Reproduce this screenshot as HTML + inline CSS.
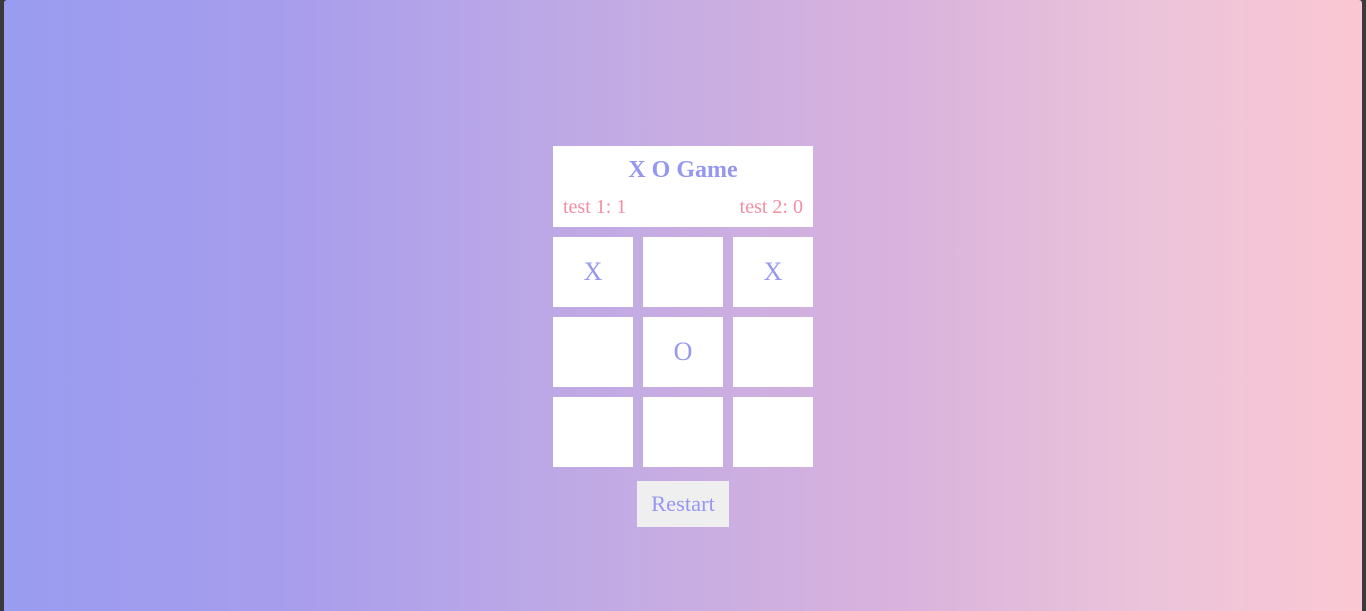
<!DOCTYPE html>
<html><head><style>
html,body{margin:0;padding:0;width:1366px;height:611px;overflow:hidden;background:#3a3a3c;font-family:"Liberation Serif",serif}
.bg{position:absolute;left:4px;top:0;width:1358px;height:611px;background:linear-gradient(90deg,#999cf0 0%,#a79ded 20%,#c2abe4 45%,#d8b2dd 65%,#ecc4da 85%,#fbc6d2 100%);border-radius:3px 3px 0 0}
.hdr{position:absolute;left:553px;top:146px;width:260px;height:81px;background:#fff}
.title{position:absolute;left:0;right:0;top:11px;text-align:center;font-weight:bold;font-size:24px;color:#9597f0}
.s{position:absolute;top:50px;font-size:20px;color:#f58ea3}
.c{position:absolute;width:80px;height:70px;background:#fff;color:#9597f0;font-size:26px;text-align:center;line-height:70px}
.btn{position:absolute;left:637px;top:481px;width:92px;height:46px;background:#efefef;color:#9597f0;font-size:22.5px;text-align:center;line-height:46px}
</style></head><body>
<div class="bg"></div>
<div class="hdr"><div class="title">X O Game</div><div class="s" style="left:10px">test 1: 1</div><div class="s" style="right:10px">test 2: 0</div></div>
<div class="c" style="left:553px;top:237px">X</div>
<div class="c" style="left:643px;top:237px"></div>
<div class="c" style="left:733px;top:237px">X</div>
<div class="c" style="left:553px;top:317px"></div>
<div class="c" style="left:643px;top:317px">O</div>
<div class="c" style="left:733px;top:317px"></div>
<div class="c" style="left:553px;top:397px"></div>
<div class="c" style="left:643px;top:397px"></div>
<div class="c" style="left:733px;top:397px"></div>
<div class="btn">Restart</div>
</body></html>
